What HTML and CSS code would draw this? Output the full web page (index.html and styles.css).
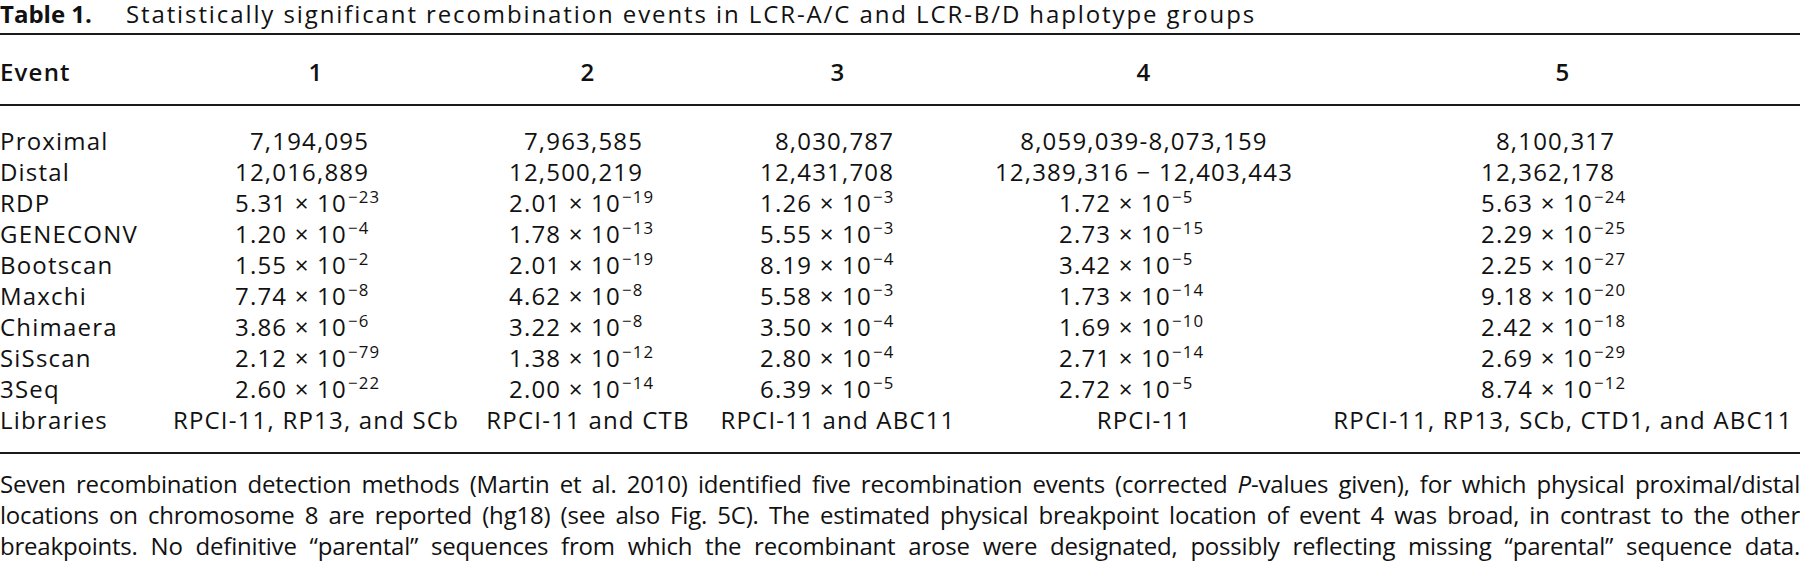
FILE: index.html
```html
<!DOCTYPE html>
<html>
<head>
<meta charset="utf-8">
<link rel="stylesheet" href="styles.css">
</head>
<body>
<div class="page">
  <div class="title"><b>Table 1.</b><span class="ttext">Statistically significant recombination events in LCR-A/C and LCR-B/D haplotype groups</span></div>
  <div class="head grid">
    <div class="c lab">Event</div>
    <div class="c ctr">1</div>
    <div class="c ctr">2</div>
    <div class="c ctr">3</div>
    <div class="c ctr">4</div>
    <div class="c ctr">5</div>
  </div>
  <div class="body grid">
    <div class="c lab">Proximal</div>
    <div class="c v v1">&#8199;7,194,095</div>
    <div class="c v v2">&#8199;7,963,585</div>
    <div class="c v v3">&#8199;8,030,787</div>
    <div class="c ctr">8,059,039-8,073,159</div>
    <div class="c v v5">&#8199;8,100,317</div>

    <div class="c lab">Distal</div>
    <div class="c v v1">12,016,889</div>
    <div class="c v v2">12,500,219</div>
    <div class="c v v3">12,431,708</div>
    <div class="c ctr">12,389,316 &minus; 12,403,443</div>
    <div class="c v v5">12,362,178</div>

    <div class="c lab">RDP</div>
    <div class="c v v1">5.31 &times; 10<sup>&minus;23</sup></div>
    <div class="c v v2">2.01 &times; 10<sup>&minus;19</sup></div>
    <div class="c v v3">1.26 &times; 10<sup>&minus;3</sup></div>
    <div class="c v v4">1.72 &times; 10<sup>&minus;5</sup></div>
    <div class="c v v5">5.63 &times; 10<sup>&minus;24</sup></div>

    <div class="c lab">GENECONV</div>
    <div class="c v v1">1.20 &times; 10<sup>&minus;4</sup></div>
    <div class="c v v2">1.78 &times; 10<sup>&minus;13</sup></div>
    <div class="c v v3">5.55 &times; 10<sup>&minus;3</sup></div>
    <div class="c v v4">2.73 &times; 10<sup>&minus;15</sup></div>
    <div class="c v v5">2.29 &times; 10<sup>&minus;25</sup></div>

    <div class="c lab">Bootscan</div>
    <div class="c v v1">1.55 &times; 10<sup>&minus;2</sup></div>
    <div class="c v v2">2.01 &times; 10<sup>&minus;19</sup></div>
    <div class="c v v3">8.19 &times; 10<sup>&minus;4</sup></div>
    <div class="c v v4">3.42 &times; 10<sup>&minus;5</sup></div>
    <div class="c v v5">2.25 &times; 10<sup>&minus;27</sup></div>

    <div class="c lab">Maxchi</div>
    <div class="c v v1">7.74 &times; 10<sup>&minus;8</sup></div>
    <div class="c v v2">4.62 &times; 10<sup>&minus;8</sup></div>
    <div class="c v v3">5.58 &times; 10<sup>&minus;3</sup></div>
    <div class="c v v4">1.73 &times; 10<sup>&minus;14</sup></div>
    <div class="c v v5">9.18 &times; 10<sup>&minus;20</sup></div>

    <div class="c lab">Chimaera</div>
    <div class="c v v1">3.86 &times; 10<sup>&minus;6</sup></div>
    <div class="c v v2">3.22 &times; 10<sup>&minus;8</sup></div>
    <div class="c v v3">3.50 &times; 10<sup>&minus;4</sup></div>
    <div class="c v v4">1.69 &times; 10<sup>&minus;10</sup></div>
    <div class="c v v5">2.42 &times; 10<sup>&minus;18</sup></div>

    <div class="c lab">SiSscan</div>
    <div class="c v v1">2.12 &times; 10<sup>&minus;79</sup></div>
    <div class="c v v2">1.38 &times; 10<sup>&minus;12</sup></div>
    <div class="c v v3">2.80 &times; 10<sup>&minus;4</sup></div>
    <div class="c v v4">2.71 &times; 10<sup>&minus;14</sup></div>
    <div class="c v v5">2.69 &times; 10<sup>&minus;29</sup></div>

    <div class="c lab">3Seq</div>
    <div class="c v v1">2.60 &times; 10<sup>&minus;22</sup></div>
    <div class="c v v2">2.00 &times; 10<sup>&minus;14</sup></div>
    <div class="c v v3">6.39 &times; 10<sup>&minus;5</sup></div>
    <div class="c v v4">2.72 &times; 10<sup>&minus;5</sup></div>
    <div class="c v v5">8.74 &times; 10<sup>&minus;12</sup></div>

    <div class="c lab">Libraries</div>
    <div class="c ctr">RPCI-11, RP13, and SCb</div>
    <div class="c ctr">RPCI-11 and CTB</div>
    <div class="c ctr">RPCI-11 and ABC11</div>
    <div class="c ctr">RPCI-11</div>
    <div class="c ctr">RPCI-11, RP13, SCb, CTD1, and ABC11</div>
  </div>
  <div class="caption">
    <div class="line">Seven recombination detection methods (Martin et al. 2010) identified five recombination events (corrected <i>P</i>-values given), for which physical proximal/distal</div>
    <div class="line">locations on chromosome 8 are reported (hg18) (see also Fig. 5C). The estimated physical breakpoint location of event 4 was broad, in contrast to the other</div>
    <div class="line">breakpoints. No definitive &ldquo;parental&rdquo; sequences from which the recombinant arose were designated, possibly reflecting missing &ldquo;parental&rdquo; sequence data.</div>
  </div>
</div>
</body>
</html>
```

FILE: styles.css
```css
html, body {
  margin: 0;
  padding: 0;
  background: #ffffff;
}
.page {
  width: 1800px;
  font-family: "Open Sans", "Noto Sans", sans-serif;
  color: #111111;
  font-size: 24px;
}
.title {
  font-size: 24px;
  line-height: 28px;
  height: 33px;
  border-bottom: 2px solid #1a1a1a;
  white-space: nowrap;
}
.title b {
  font-weight: 700;
}
.ttext {
  margin-left: 34px;
  letter-spacing: 1.9px;
}
.grid {
  display: grid;
  grid-template-columns: 170px 292px 252px 248px 364px 474px;
  grid-auto-rows: 31px;
  line-height: 31px;
  letter-spacing: 1.2px;
}
.head {
  grid-auto-rows: 65px;
  line-height: 65px;
  font-weight: 600;
  padding-top: 4px;
  border-bottom: 2px solid #1a1a1a;
}
.body {
  padding-top: 19px;
  padding-bottom: 17px;
  border-bottom: 2px solid #1a1a1a;
}
.c {
  white-space: nowrap;
  min-width: 0;
}
.lab {
  text-align: left;
}
.ctr {
  text-align: center;
}
.v {
  text-align: left;
}
.v1 { padding-left: 65px; }
.v2 { padding-left: 47px; }
.v3 { padding-left: 46px; }
.v4 { padding-left: 97px; }
.v5 { padding-left: 155px; }
sup {
  font-size: 70%;
  line-height: 0;
  vertical-align: 9px;
  margin-left: 1px;
}
.caption {
  padding-top: 14px;
  font-size: 24px;
  line-height: 31px;
  letter-spacing: -0.2px;
}
.line {
  text-align: justify;
  text-align-last: justify;
  white-space: nowrap;
}
```
